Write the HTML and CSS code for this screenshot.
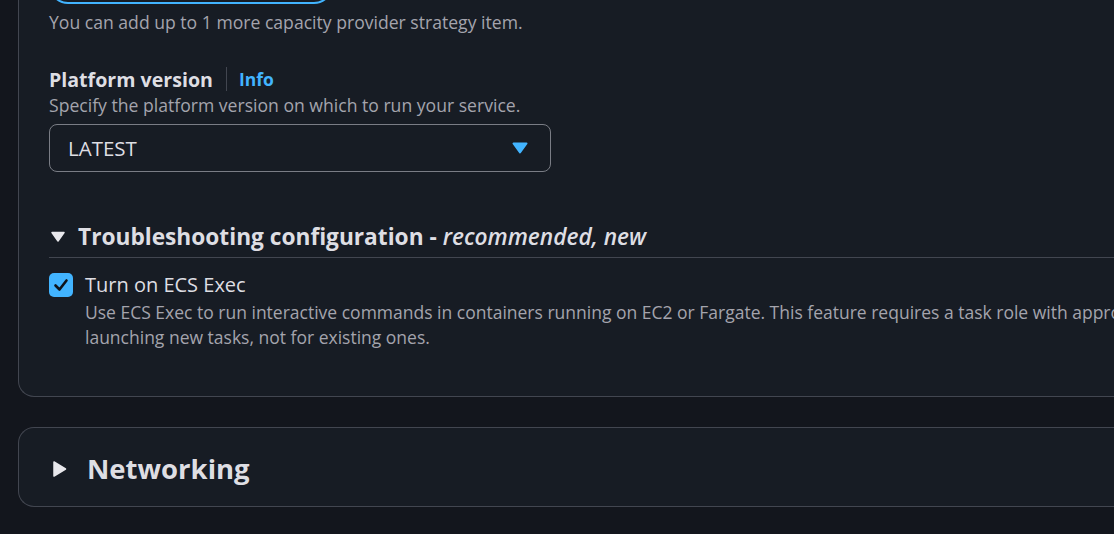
FILE: index.html
```html
<!DOCTYPE html>
<html>
<head>
<meta charset="utf-8">
<link rel="stylesheet" href="styles.css">
</head>
<body>
<div class="page">
  <section class="card card-main">
    <div class="add-btn"></div>
    <p class="hint">You can add up to 1 more capacity provider strategy item.</p>

    <div class="field">
      <div class="label-row">
        <span class="label">Platform version</span>
        <span class="sep"></span>
        <a class="info">Info</a>
      </div>
      <p class="desc">Specify the platform version on which to run your service.</p>
      <div class="select">
        <span class="select-value">LATEST</span>
        <svg class="caret" width="16" height="12" viewBox="0 0 16 12"><path d="M1.5 1.5 H14.5 L8 10.5 Z" fill="#42b4ff" stroke="#42b4ff" stroke-width="2" stroke-linejoin="round"/></svg>
      </div>
    </div>

    <div class="expander">
      <div class="exp-head">
        <svg class="tri-down" width="16" height="12" viewBox="0 0 16 12"><path d="M2 1.5 H14 L8 10 Z" fill="#e8e8ec" stroke="#e8e8ec" stroke-width="1.5" stroke-linejoin="round"/></svg>
        <h3 class="exp-title">Troubleshooting configuration - <em>recommended, new</em></h3>
      </div>
      <div class="check-row">
        <span class="checkbox">
          <svg width="24" height="24" viewBox="0 0 24 24"><path d="M6.5 12.5 L10.5 16.5 L17.5 7.5" fill="none" stroke="#0f141a" stroke-width="2.6" stroke-linecap="round" stroke-linejoin="round"/></svg>
        </span>
        <div class="check-text">
          <div class="check-label">Turn on ECS Exec</div>
          <div class="check-desc"><span class="line">Use ECS Exec to run interactive commands in containers running on EC2 or Fargate. This feature requires a task role with appropriate permissions and applies only when</span><span class="line">launching new tasks, not for existing ones.</span></div>
        </div>
      </div>
    </div>
  </section>

  <section class="card card-net">
    <svg class="tri-right" width="16" height="18" viewBox="0 0 16 18"><path d="M2 2 L13.5 9 L2 16 Z" fill="#e8e8ec" stroke="#e8e8ec" stroke-width="1.5" stroke-linejoin="round"/></svg>
    <h2 class="net-title">Networking</h2>
  </section>
</div>
</body>
</html>
```

FILE: styles.css
```css
html, body {
  margin: 0;
  padding: 0;
}
body {
  background: #13161d;
  font-family: "Open Sans", "Noto Sans", sans-serif;
  color: #dedee3;
  overflow: hidden;
  width: 1114px;
  height: 534px;
}
.page {
  padding-left: 18px;
  margin-top: -40px;
  display: flex;
  flex-direction: column;
  gap: 30px;
}
.card {
  background: #171c24;
  border: 1px solid #424650;
  border-right: none;
  margin-right: -40px;
  border-radius: 16px 0 0 16px;
}
.card-main {
  padding: 0 0 46px 30px;
  border-top-left-radius: 0;
}
.add-btn {
  width: 284px;
  height: 38px;
  border: 2px solid #42b4ff;
  border-radius: 20px;
  box-sizing: border-box;
  margin-top: 5px;
}
.hint {
  margin: 6px 0 0;
  font-size: 17.6px;
  line-height: 25px;
  color: #a4a4ad;
}
.field {
  margin-top: 32px;
}
.label-row {
  display: flex;
  align-items: center;
  height: 24px;
}
.label {
  font-weight: 700;
  font-size: 19.6px;
  color: #dedee3;
}
.sep {
  width: 1px;
  height: 24px;
  background: #424650;
  margin: 0 12px 0 13px;
}
.info {
  font-weight: 700;
  font-size: 17.5px;
  color: #42b4ff;
}
.desc {
  margin: 2px 0 0;
  font-size: 17.6px;
  line-height: 25px;
  color: #a4a4ad;
}
.select {
  margin-top: 6px;
  width: 502px;
  height: 48px;
  box-sizing: border-box;
  border: 1px solid #7a7d85;
  border-radius: 8px;
  display: flex;
  align-items: center;
  justify-content: space-between;
  padding: 0 22px 0 18px;
}
.select-value {
  font-size: 20.5px;
  color: #dedee3;
}
.caret {
  display: block;
}
.expander {
  margin-top: 51px;
}
.exp-head {
  display: flex;
  align-items: center;
  height: 27px;
  padding-bottom: 7px;
  border-bottom: 1px solid #424650;
}
.tri-down {
  margin-left: 1px;
  margin-right: 12px;
}
.exp-title {
  margin: 0;
  font-size: 22.7px;
  font-weight: 700;
  color: #dedee3;
  white-space: nowrap;
}
.exp-title em {
  font-weight: 600;
}
.check-row {
  display: flex;
  margin-top: 15px;
  gap: 12px;
}
.checkbox {
  flex: none;
  width: 24px;
  height: 24px;
  border-radius: 5px;
  background: #42b4ff;
}
.checkbox svg {
  display: block;
}
.check-text {
  min-width: 0;
}
.check-label {
  font-size: 20px;
  line-height: 24px;
  color: #dedee3;
}
.check-desc {
  font-size: 17.5px;
  line-height: 25px;
  color: #a4a4ad;
  margin-top: 3px;
}
.check-desc .line {
  display: block;
  white-space: nowrap;
}
.card-net {
  display: flex;
  align-items: center;
  height: 75px;
  padding: 3px 0 0 33px;
}
.tri-right {
  display: block;
  margin-right: 19px;
}
.net-title {
  margin: 0;
  font-size: 27.5px;
  font-weight: 700;
  color: #dedee3;
}
```
